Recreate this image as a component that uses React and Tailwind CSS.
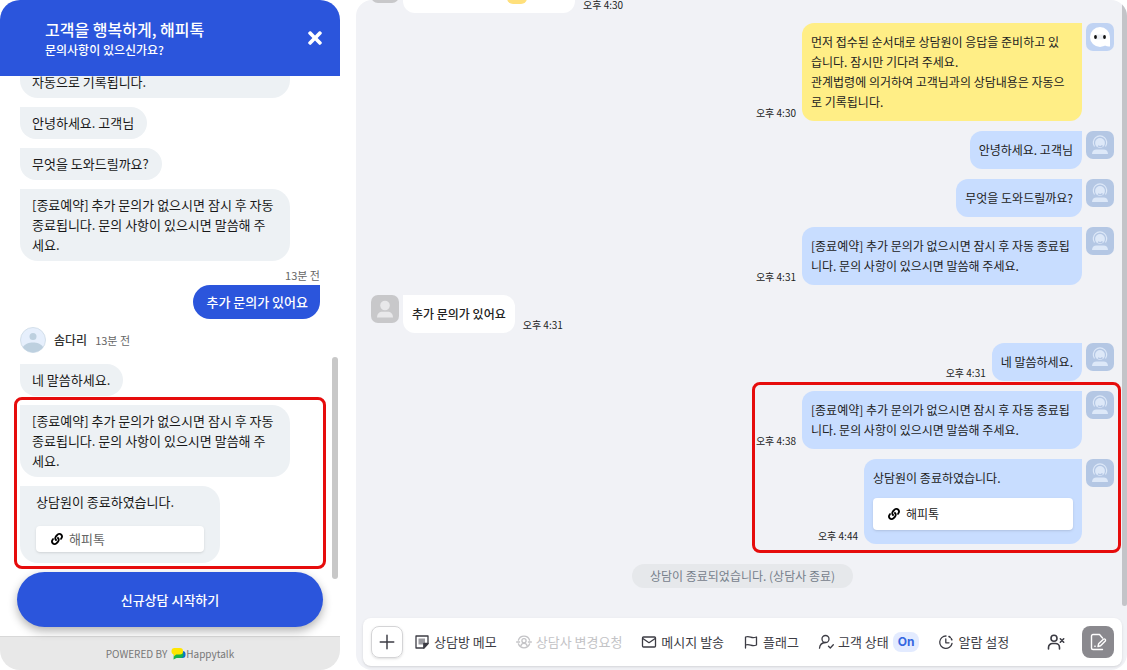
import React from "react";
import { FaLink, FaTimes } from "react-icons/fa";

const CLOSING_NOTICE =
  "[종료예약] 추가 문의가 없으시면 잠시 후 자동 종료됩니다. 문의 사항이 있으시면 말씀해 주세요.";

/* ---------- icons ---------- */

const Icon = ({ size = 16, children }) => (
  <svg
    width={size}
    height={size}
    viewBox="0 0 16 16"
    fill="none"
    stroke="currentColor"
    strokeWidth="1.3"
    strokeLinecap="round"
    strokeLinejoin="round"
    className="shrink-0"
    aria-hidden="true"
  >
    {children}
  </svg>
);

const MemoIcon = () => (
  <Icon>
    <rect x="4.5" y="4.500" width="6.500" height="6" fill="#9a9aa0" stroke="none" />
    <path d="M2 2h12v7.500L9.800 14H2z" />
    <path d="M14 9.500H9.800V14z" fill="currentColor" />
  </Icon>
);

const ChangeAgentIcon = () => (
  <Icon>
    <circle cx="8" cy="6.8" r="2.1" />
    <path d="M4.8 12c.4-1.8 1.6-2.7 3.2-2.7s2.800.9 3.200 2.700" />
    <path d="M2.400 6.200A5.900 5.900 0 0 1 13.600 6.200M13.600 9.800A5.900 5.900 0 0 1 2.400 9.800" />
    <path d="M.600 8h3M12.400 8h3" />
  </Icon>
);

const MailIcon = () => (
  <Icon>
    <rect x="1.5" y="3" width="13" height="10" rx="1" />
    <path d="M1.800 4.500L8 8.700l6.200-4.200" />
  </Icon>
);

const FlagIcon = () => (
  <Icon>
    <path d="M2.500 14V3c1.800-.7 3.400-.5 5.200.2s3.700.6 5.800-.2v8c-2.100.8-4 .7-5.800.1s-3.400-.8-5.200-.1" />
  </Icon>
);

const CustomerIcon = () => (
  <Icon>
    <circle cx="7.500" cy="5" r="3.500" />
    <path d="M1.500 14.200c.3-3.300 2.600-5.400 5.700-5.700M10.500 12.200l1.800 1.800 3-3.200" />
  </Icon>
);

const AlarmIcon = () => (
  <Icon>
    <path d="M8 2A6.200 6.200 0 1 0 14 9.500" />
    <path d="M7.800 5v3.800h3.200" />
    <path d="M11 2.500l1.300.8M13.200 4.600l.7 1.300" strokeWidth="1.500" />
  </Icon>
);

const LeaveIcon = () => (
  <svg
    width="18"
    height="18"
    viewBox="0 0 18 18"
    fill="none"
    stroke="currentColor"
    strokeWidth="1.6"
    strokeLinecap="round"
    aria-hidden="true"
  >
    <circle cx="7" cy="5.200" r="3" />
    <path d="M1.500 16v-1.500a4 4 0 0 1 4-4h3a4 4 0 0 1 4 4V16" />
    <path d="M13.300 5.800l3.400 3.400M16.700 5.800l-3.400 3.400" />
  </svg>
);

const NoteEditIcon = () => (
  <svg
    width="18"
    height="18"
    viewBox="0 0 18 18"
    fill="none"
    stroke="currentColor"
    strokeWidth="1.400"
    strokeLinecap="round"
    strokeLinejoin="round"
    aria-hidden="true"
  >
    <path d="M13.500 5L10.500 1.500H4A1.500 1.500 0 0 0 2.500 3v12A1.500 1.500 0 0 0 4 16.500h9.500" />
    <path d="M9 13.500l.6-2.700 4.800-4.600c1.200-.9 2.800.6 1.900 1.800l-4.700 4.800z" />
    <path d="M5.800 13.300h.4" />
  </svg>
);

const AgentAvatar = () => (
  <svg width="28" height="28" viewBox="0 0 28 28" className="shrink-0" aria-hidden="true">
    <rect width="28" height="28" rx="7" fill="#b4c7e4" />
    <path
      d="M8.500 15.500A6.700 6.700 0 1 1 19.500 15.500"
      fill="none"
      stroke="#dde8f8"
      strokeWidth="1.200"
    />
    <circle cx="14" cy="12" r="4.900" fill="#dde8f8" />
    <path d="M12 14.800c1.500 1.300 3.500 1 4.500-.3" fill="none" stroke="#b4c7e4" strokeWidth="1.300" />
    <path d="M6 23c0-3 2-4.400 4.500-4.400h7c2.500 0 4.500 1.400 4.500 4.400z" fill="#dde8f8" />
  </svg>
);

const BotAvatar = () => (
  <svg width="28" height="28" viewBox="0 0 28 28" className="shrink-0" aria-hidden="true">
    <rect width="28" height="28" rx="7" fill="#c0d3f3" />
    <circle cx="14" cy="14" r="10" fill="#fff" />
    <path d="M24 14v9.500c-2 0-4-.3-6-1.500z" fill="#fff" />
    <rect x="8" y="11.500" width="12" height="5" rx="2.500" fill="#eceff4" />
    <ellipse cx="9.500" cy="14" rx="1.400" ry="1.900" fill="#111" />
    <ellipse cx="18.500" cy="14" rx="1.400" ry="1.900" fill="#111" />
  </svg>
);

const GuestAvatar = () => (
  <svg width="28" height="28" viewBox="0 0 28 28" className="shrink-0" aria-hidden="true">
    <rect width="28" height="28" rx="7" fill="#c8c8ca" />
    <circle cx="14" cy="10.500" r="4.800" fill="#e8e8ea" />
    <path d="M6 22.500c0-4 2.400-5.800 5.500-5.800h5c3.100 0 5.500 1.800 5.500 5.800z" fill="#e8e8ea" />
  </svg>
);

const RoundAvatar = () => (
  <svg width="26" height="26" viewBox="0 0 26 26" className="shrink-0" aria-hidden="true">
    <circle cx="13" cy="13" r="12.500" fill="#e6effc" stroke="#d3dfea" />
    <circle cx="13" cy="9.500" r="3.500" fill="#bdd0df" />
    <path d="M2.800 20.200C5 16.800 9 15.500 13 15.500s8 1.300 10.200 4.700A12.500 12.500 0 0 1 2.800 20.200z" fill="#bdd0df" />
  </svg>
);

const HappytalkLogo = () => (
  <svg width="15" height="13" viewBox="0 0 15 13" aria-hidden="true">
    <rect x="5" y="4" width="9.500" height="7" rx="3" fill="#0a6fd0" />
    <path d="M3 5h7.500c1.200 0 2 .8 2 2.500S11.500 11 9.500 11H5.500L2.500 12.500z" fill="#17b34a" />
    <rect x="0.5" y="1" width="11.500" height="6.500" rx="3" fill="#ffe600" />
    <path d="M2.500 6h4l-3.500 3.500z" fill="#ffe600" />
  </svg>
);

/* ---------- customer widget ---------- */

const WidgetBubble = ({ children }) => (
  <p className="max-w-[270px] rounded-[18px] rounded-tl-none bg-[#edf1f4] py-1.5 pr-[13px] pl-3 text-[13px] leading-5 text-[#191919]">
    {children}
  </p>
);

const CustomerWidget = () => (
  <section className="flex w-[340px] shrink-0 flex-col overflow-hidden rounded-[20px] bg-white">
    <header className="flex h-[76px] shrink-0 items-center justify-between bg-[#2b55dc] pr-[15px] pl-[45px] text-white">
      <div>
        <h1 className="text-base leading-6 font-medium">고객을 행복하게, 해피톡</h1>
        <p className="text-xs leading-[18px] font-medium">문의사항이 있으신가요?</p>
      </div>
      <button type="button" aria-label="닫기">
        <FaTimes size={20} />
      </button>
    </header>

    <div className="relative flex min-h-0 flex-1 flex-col">
      <div className="flex min-h-0 flex-1 flex-col items-start justify-end gap-[9px] overflow-hidden px-5 pb-[9px]">
        <WidgetBubble>
          관계법령에 의거하여 고객님과의 상담내용은 자동으로 기록됩니다.
        </WidgetBubble>
        <WidgetBubble>안녕하세요. 고객님</WidgetBubble>
        <WidgetBubble>무엇을 도와드릴까요?</WidgetBubble>
        <WidgetBubble>{CLOSING_NOTICE}</WidgetBubble>

        <div className="-mt-[5px] flex flex-col items-end self-end">
          <time className="text-[11px] leading-5 text-[#666]">13분 전</time>
          <p className="rounded-[18px] rounded-tr-none bg-[#2b55dc] py-[7px] pr-3 pl-[13px] text-[13px] leading-5 font-medium text-white">
            추가 문의가 있어요
          </p>
        </div>

        <div className="-mt-px flex items-center gap-2 pb-0.5">
          <RoundAvatar />
          <span className="text-xs leading-5 font-medium text-[#333]">솜다리</span>
          <time className="text-[11px] leading-5 text-[#666]">13분 전</time>
        </div>
        <WidgetBubble>네 말씀하세요.</WidgetBubble>

        <div className="relative flex w-full flex-col items-start gap-[9px]">
          <WidgetBubble>{CLOSING_NOTICE}</WidgetBubble>
          <div className="w-[200px] rounded-[18px] rounded-tl-none bg-[#edf1f4] px-4 pt-1.5 pb-[11px] text-[13px] leading-5 text-[#191919]">
            <p>상담원이 종료하였습니다.</p>
            <a
              href="#happytalk"
              className="mt-3.5 flex h-[26px] items-center gap-1.5 rounded bg-white px-[15px] text-[#666] shadow-sm"
            >
              <FaLink size={12} className="text-black" />
              해피톡
            </a>
          </div>
          <div className="pointer-events-none absolute -inset-x-1.5 -top-2 -bottom-1.5 rounded-lg border-[3px] border-[#e60c0c]" />
        </div>
      </div>

      <div className="px-[17px] pb-[9px]">
        <button
          type="button"
          className="h-[55px] w-full rounded-full bg-[#2b55dc] text-[13px] font-medium text-white shadow-[0_4px_10px_rgba(0,0,0,0.3)]"
        >
          신규상담 시작하기
        </button>
      </div>
      <div className="absolute right-0.5 bottom-[57px] h-[222px] w-1.5 rounded-full bg-[#c8c8c8]" />
    </div>

    <footer className="flex h-[34px] shrink-0 items-center justify-center border-t border-[#d8d8d8] bg-[#e8e8e8] text-[10px] text-[#777]">
      <span className="mr-1">POWERED BY</span>
      <HappytalkLogo />
      <span>Happytalk</span>
    </footer>
  </section>
);

/* ---------- agent console ---------- */

const Time = ({ children }) => (
  <time className="shrink-0 pb-px text-[10px] leading-[15px] text-[#222]">{children}</time>
);

const AgentRow = ({ time, bot = false, card = false, children }) => (
  <div className="flex items-start justify-end gap-1">
    <div className="flex items-end gap-1.5">
      {time && <Time>{time}</Time>}
      <div
        className={`rounded-xl rounded-tr-none pt-[9px] pl-[9px] text-xs leading-5 text-[#222] ${
          card ? "w-[218px] pb-3.5" : "max-w-[280px] pb-[9px]"
        } ${bot ? "bg-[#ffee86] pr-[13px]" : "bg-[#c8ddff] pr-[9px]"}`}
      >
        {children}
      </div>
    </div>
    {bot ? <BotAvatar /> : <AgentAvatar />}
  </div>
);

const GuestRow = ({ time, children }) => (
  <div className="flex items-start gap-1">
    <GuestAvatar />
    <div className="flex items-end gap-2">
      <div className="rounded-xl rounded-tl-none bg-white px-[9px] py-[9px] text-xs leading-5 font-medium text-[#222]">
        {children}
      </div>
      <Time>{time}</Time>
    </div>
  </div>
);

const tools = [
  { label: "상담방 메모", icon: MemoIcon },
  { label: "상담사 변경요청", icon: ChangeAgentIcon, disabled: true },
  { label: "메시지 발송", icon: MailIcon },
  { label: "플래그", icon: FlagIcon },
  { label: "고객 상태", icon: CustomerIcon, badge: "On" },
  { label: "알람 설정", icon: AlarmIcon },
];

const Toolbar = () => (
  <div className="flex h-12 items-center rounded-lg bg-white px-2 text-[#3c3c44] shadow-sm">
    <button
      type="button"
      aria-label="추가"
      className="mr-[11px] flex size-8 items-center justify-center rounded-lg border border-[#d4d4d6] shadow-sm"
    >
      <Icon size={18}>
        <path d="M8 2v12M2 8h12" />
      </Icon>
    </button>
    <div className="flex gap-[19px]">
      {tools.map(({ label, icon: ToolIcon, disabled, badge }) => (
        <button
          key={label}
          type="button"
          disabled={disabled}
          className="flex items-center gap-1 text-[13px] leading-5 whitespace-nowrap disabled:text-[#c3c3c6]"
        >
          <ToolIcon />
          {label}
          {badge && (
            <span className="rounded-lg bg-[#e3ebff] px-[5px] font-['Inter',sans-serif] text-xs leading-5 font-bold text-[#3566e0]">
              {badge}
            </span>
          )}
        </button>
      ))}
    </div>
    <div className="ml-auto flex items-center gap-[17px]">
      <button type="button" aria-label="상담 나가기">
        <LeaveIcon />
      </button>
      <button
        type="button"
        aria-label="상담 기록"
        className="flex size-8 items-center justify-center rounded-lg bg-[#8a898e] text-white"
      >
        <NoteEditIcon />
      </button>
    </div>
  </div>
);

const AgentConsole = () => (
  <section className="relative flex min-w-0 flex-1 flex-col overflow-hidden rounded-[16px] bg-[#f1f2f6]">
    <div className="flex min-h-0 flex-1 flex-col justify-end gap-2.5 overflow-hidden pr-[13px] pb-[19px] pl-[15px]">
      <GuestRow time="오후 4:30">
        <div className="flex h-5 w-[154px] items-center pl-[95px]">
          <span className="h-5 w-5 rounded-md bg-[#ffe07c]" />
        </div>
      </GuestRow>
      <AgentRow time="오후 4:30" bot>
        먼저 접수된 순서대로 상담원이 응답을 준비하고 있습니다. 잠시만 기다려 주세요.
        <br />
        관계법령에 의거하여 고객님과의 상담내용은 자동으로 기록됩니다.
      </AgentRow>
      <AgentRow>안녕하세요. 고객님</AgentRow>
      <AgentRow>무엇을 도와드릴까요?</AgentRow>
      <AgentRow time="오후 4:31">{CLOSING_NOTICE}</AgentRow>
      <GuestRow time="오후 4:31">추가 문의가 있어요</GuestRow>
      <AgentRow time="오후 4:31">네 말씀하세요.</AgentRow>

      <div className="relative flex flex-col gap-2.5 self-end">
        <AgentRow time="오후 4:38">{CLOSING_NOTICE}</AgentRow>
        <AgentRow time="오후 4:44" card>
          <p>상담원이 종료하였습니다.</p>
          <a
            href="#happytalk"
            className="mt-2.5 flex h-8 items-center gap-1.5 rounded bg-white px-[15px] shadow-sm"
          >
            <FaLink size={12} className="text-black" />
            해피톡
          </a>
        </AgentRow>
        <div className="pointer-events-none absolute -top-[9px] -right-[7px] -bottom-[9px] -left-1 rounded-lg border-[3px] border-[#e60c0c]" />
      </div>

      <p className="mt-2.5 self-center rounded-full bg-[#e6e8eb] px-[18px] text-xs leading-6 text-[#76808c]">
        상담이 종료되었습니다. (상담사 종료)
      </p>
    </div>
    <div className="absolute top-0 right-0 bottom-16 w-[5px] rounded-b-full bg-[#c3c4c8]" />

    <div className="pt-[11px] pr-[5px] pb-1 pl-[7px]">
      <Toolbar />
    </div>
  </section>
);

const App = () => (
  <main className="flex h-screen gap-4 bg-white font-['Noto_Sans_CJK_KR',sans-serif]">
    <CustomerWidget />
    <AgentConsole />
  </main>
);

export default App;
